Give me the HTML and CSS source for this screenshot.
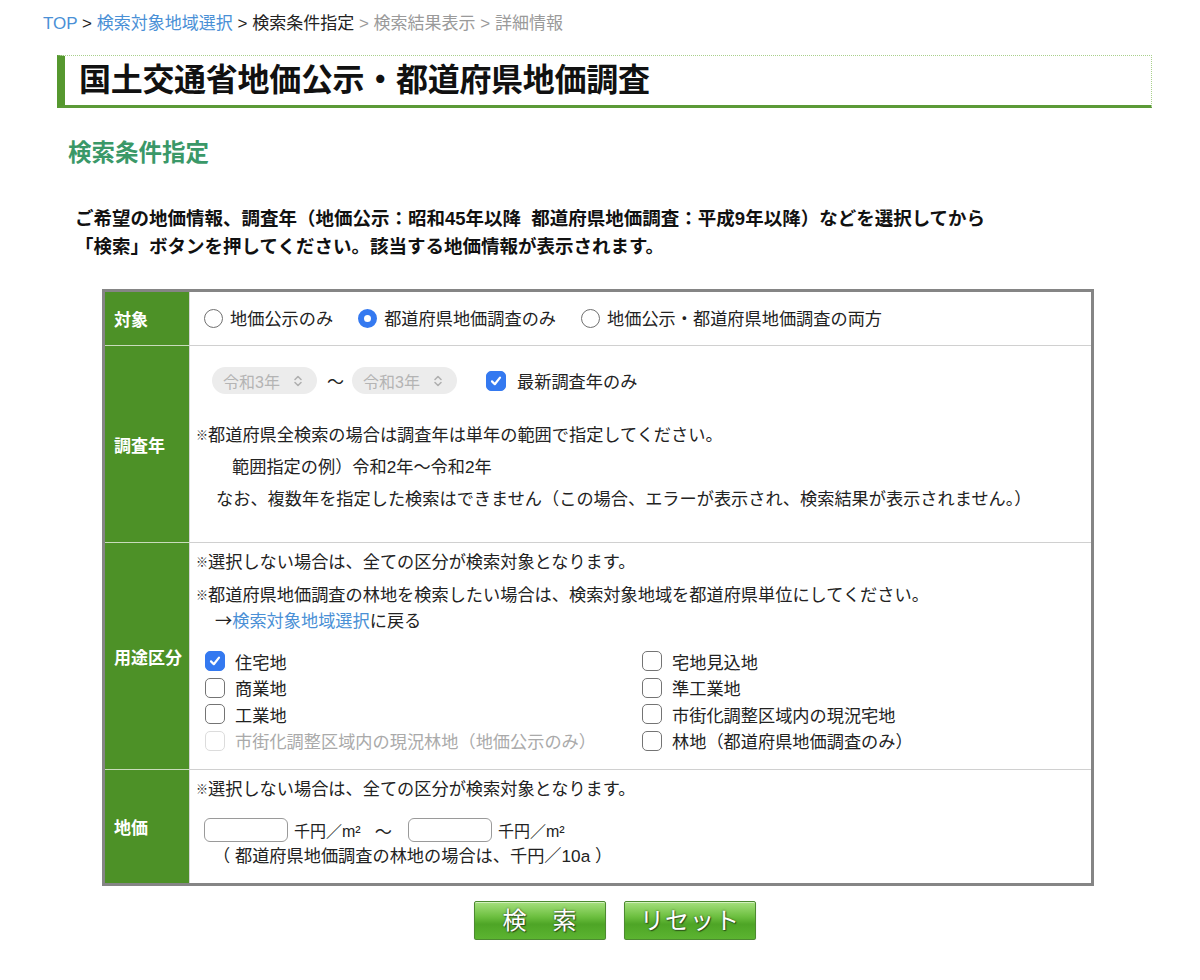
FILE: index.html
```html
<!DOCTYPE html>
<html lang="ja">
<head>
<meta charset="utf-8">
<title>検索条件指定</title>
<link rel="stylesheet" href="styles.css">
</head>
<body>
<div class="page">
  <nav class="crumbs">
    <a class="lnk" href="#">TOP</a> <span class="sep">&gt;</span> <a class="lnk" href="#">検索対象地域選択</a> <span class="cur">&gt; 検索条件指定</span> <span class="off">&gt; 検索結果表示 &gt; 詳細情報</span>
  </nav>

  <h1 class="title">国土交通省地価公示・都道府県地価調査</h1>

  <h2 class="sub">検索条件指定</h2>

  <p class="lead">ご希望の地価情報、調査年（地価公示：昭和45年以降&nbsp;&nbsp;都道府県地価調査：平成9年以降）などを選択してから<br>「検索」ボタンを押してください。該当する地価情報が表示されます。</p>

  <div class="form">
    <div class="th r1">対象</div>
    <div class="td r1 radios">
      <label class="opt"><span class="radio"></span>地価公示のみ</label>
      <label class="opt"><span class="radio on"></span>都道府県地価調査のみ</label>
      <label class="opt"><span class="radio"></span>地価公示・都道府県地価調査の両方</label>
    </div>

    <div class="th r2">調査年</div>
    <div class="td r2">
      <div class="years">
        <div class="sel"><span>令和3年</span><svg width="10" height="14" viewBox="0 0 10 14"><path d="M2 5.5 L5 2.5 L8 5.5 M2 8.5 L5 11.5 L8 8.5" fill="none" stroke="#b0b0b0" stroke-width="1.6" stroke-linecap="round" stroke-linejoin="round"/></svg></div>
        <span class="tilde">〜</span>
        <div class="sel"><span>令和3年</span><svg width="10" height="14" viewBox="0 0 10 14"><path d="M2 5.5 L5 2.5 L8 5.5 M2 8.5 L5 11.5 L8 8.5" fill="none" stroke="#b0b0b0" stroke-width="1.6" stroke-linecap="round" stroke-linejoin="round"/></svg></div>
        <label class="latest"><span class="cbox on"><svg width="14" height="14" viewBox="0 0 14 14"><path d="M3 7.4 L5.8 10.2 L11 3.6" fill="none" stroke="#fff" stroke-width="2.2" stroke-linecap="round" stroke-linejoin="round"/></svg></span>最新調査年のみ</label>
      </div>
      <div class="notes">
        <div class="n1"><span class="kome">※</span>都道府県全検索の場合は調査年は単年の範囲で指定してください。</div>
        <div class="n2">範囲指定の例）令和2年〜令和2年</div>
        <div class="n3">なお、複数年を指定した検索はできません（この場合、エラーが表示され、検索結果が表示されません。）</div>
      </div>
    </div>

    <div class="th r3">用途区分</div>
    <div class="td r3">
      <div class="line"><span class="kome">※</span>選択しない場合は、全ての区分が検索対象となります。</div>
      <div class="line gap"><span class="kome">※</span>都道府県地価調査の林地を検索したい場合は、検索対象地域を都道府県単位にしてください。</div>
      <div class="line back"><span class="arrow">→</span><a class="lnk" href="#">検索対象地域選択</a>に戻る</div>
      <div class="uses">
        <label class="use"><span class="cbox on"><svg width="14" height="14" viewBox="0 0 14 14"><path d="M3 7.4 L5.8 10.2 L11 3.6" fill="none" stroke="#fff" stroke-width="2.2" stroke-linecap="round" stroke-linejoin="round"/></svg></span>住宅地</label>
        <label class="use"><span class="cbox"></span>宅地見込地</label>
        <label class="use"><span class="cbox"></span>商業地</label>
        <label class="use"><span class="cbox"></span>準工業地</label>
        <label class="use"><span class="cbox"></span>工業地</label>
        <label class="use"><span class="cbox"></span>市街化調整区域内の現況宅地</label>
        <label class="use dis"><span class="cbox"></span>市街化調整区域内の現況林地（地価公示のみ）</label>
        <label class="use"><span class="cbox"></span>林地（都道府県地価調査のみ）</label>
      </div>
    </div>

    <div class="th r4">地価</div>
    <div class="td r4">
      <div class="line"><span class="kome">※</span>選択しない場合は、全ての区分が検索対象となります。</div>
      <div class="price">
        <input class="num" type="text"><span class="unit">千円／m²</span><span class="tilde2">〜</span><input class="num" type="text"><span class="unit">千円／m²</span>
      </div>
      <div class="line forest">（ 都道府県地価調査の林地の場合は、千円／10a ）</div>
    </div>
  </div>

  <div class="buttons">
    <button class="btn" type="button">検　索</button>
    <button class="btn" type="button">リセット</button>
  </div>
</div>
</body>
</html>
```

FILE: styles.css
```css
html, body {
  margin: 0;
  padding: 0;
  background: #fff;
}
body {
  font-family: "Liberation Sans", "Noto Sans CJK JP", sans-serif;
  color: #222;
  font-size: 17px;
}
.page {
  padding: 12px 0 0 43px;
  width: 1108px;
}
.lnk {
  color: #4a90d6;
  text-decoration: none;
}
.crumbs {
  font-size: 17px;
  line-height: 24px;
  color: #222;
}
.crumbs .off {
  color: #9a9a9a;
}
.title {
  margin: 19px 0 0 14px;
  width: 1072px;
  height: 49px;
  box-sizing: content-box;
  padding: 0 0 0 14px;
  border-top: 1px dotted #a9d08c;
  border-right: 1px dotted #a9d08c;
  border-bottom: 3px solid #5b9a37;
  border-left: 8px solid #56982f;
  font-size: 32px;
  line-height: 49px;
  font-weight: bold;
  color: #111;
  letter-spacing: -0.3px;
}
.sub {
  margin: 30px 0 0 25px;
  font-size: 23.5px;
  line-height: 30px;
  font-weight: bold;
  color: #3a9868;
}
.lead {
  margin: 37px 0 0 32px;
  font-size: 18.5px;
  line-height: 28px;
  font-weight: bold;
  color: #111;
}
.form {
  margin: 28px 0 0 59px;
  width: 986px;
  border: 3px solid #858585;
  display: grid;
  grid-template-columns: 85px 1fr;
}
.th {
  background: #4d9127;
  color: #fff;
  font-weight: bold;
  font-size: 17px;
  display: flex;
  align-items: center;
  padding-left: 9px;
  box-sizing: border-box;
  border-right: 1px solid #d6d6d6;
  border-bottom: 1px solid #c9dcbc;
}
.td {
  border-bottom: 1px solid #d0d0d0;
  padding-left: 6px;
  font-size: 17.2px;
  color: #222;
}
.th.r4, .td.r4 {
  border-bottom: none;
}
.r1 { height: 54px; box-sizing: border-box; }
.radios {
  display: flex;
  align-items: center;
  padding-left: 14px;
}
.opt {
  display: flex;
  align-items: center;
  margin-right: 25px;
  line-height: 24px;
}
.radio {
  width: 19px;
  height: 19px;
  box-sizing: border-box;
  border: 1.5px solid #707070;
  border-radius: 50%;
  margin-right: 7px;
  background: #fff;
}
.radio.on {
  border: 6px solid #3479f0;
  background: #fff;
}
.td.r2 {
  padding-top: 21px;
  padding-bottom: 27px;
}
.years {
  display: flex;
  align-items: center;
  padding-left: 16px;
  height: 27px;
}
.sel {
  width: 105px;
  height: 27px;
  box-sizing: border-box;
  border-radius: 14px;
  background: #ececec;
  color: #b4b4b4;
  display: flex;
  align-items: center;
  justify-content: space-between;
  padding: 0 14px 0 11px;
  font-size: 16px;
}
.tilde {
  margin: 0 8px 0 10px;
  font-size: 17px;
}
.latest {
  display: flex;
  align-items: center;
  margin-left: 29px;
}
.latest .cbox {
  margin-right: 11px;
}
.cbox {
  width: 20px;
  height: 20px;
  box-sizing: border-box;
  border: 1.5px solid #747474;
  border-radius: 5px;
  background: #fff;
  display: inline-flex;
  align-items: center;
  justify-content: center;
  flex: none;
}
.cbox.on {
  background: #3479f0;
  border-color: #3479f0;
}
.notes {
  margin-top: 25px;
  line-height: 32px;
}
.kome {
  font-size: 12px;
  line-height: 1;
  display: inline-block;
  width: 12px;
  vertical-align: 1px;
}
.n2 { padding-left: 36px; }
.n3 { padding-left: 20px; }
.td.r3 {
  padding-top: 6px;
  padding-bottom: 15px;
}
.line {
  line-height: 26px;
  height: 26px;
}
.gap { margin-top: 7px; }
.back { padding-left: 19px; }
.arrow {
  font-family: "Noto Sans CJK JP", sans-serif;
  line-height: 1;
}
.uses {
  margin-top: 14px;
  padding-left: 9px;
  display: grid;
  grid-template-columns: 437px 1fr;
  grid-auto-rows: 26.5px;
}
.use {
  display: flex;
  align-items: center;
}
.use .cbox {
  margin-right: 10px;
}
.use.dis {
  color: #aaa;
}
.use.dis .cbox {
  border-color: #dcdcdc;
}
.td.r4 {
  padding-top: 6px;
  padding-bottom: 14px;
}
.price {
  margin-top: 16px;
  display: flex;
  align-items: center;
  height: 24px;
  padding-left: 8px;
  margin-bottom: 1px;
}
.num {
  width: 84px;
  height: 24px;
  box-sizing: border-box;
  border: 1px solid #9a9a9a;
  border-radius: 6px;
  margin: 0;
  padding: 0 4px;
  background: #fff;
}
.unit {
  margin-left: 6px;
  font-size: 16px;
}
.tilde2 {
  margin: 0 16px 0 14px;
}
.forest {
  padding-left: 17px;
}
.buttons {
  margin: 15px 0 0 431px;
  display: flex;
  gap: 18px;
}
.btn {
  width: 132px;
  height: 39px;
  border: 1px solid #4c8a30;
  border-radius: 2px;
  background: linear-gradient(to bottom, #a6e07e 0%, #6cbf3f 40%, #4ea526 60%, #5cb431 100%);
  box-shadow: inset 0 1px 0 rgba(255,255,255,0.5), 0 1px 1px rgba(0,0,0,0.25);
  color: #fff;
  font-family: "Liberation Sans", "Noto Sans CJK JP", sans-serif;
  font-size: 24px;
  line-height: 37px;
  padding: 0;
  text-shadow: 0 0 2px rgba(40,60,30,0.9), 1px 1px 1px rgba(0,0,0,0.5);
  letter-spacing: 1px;
}
```
